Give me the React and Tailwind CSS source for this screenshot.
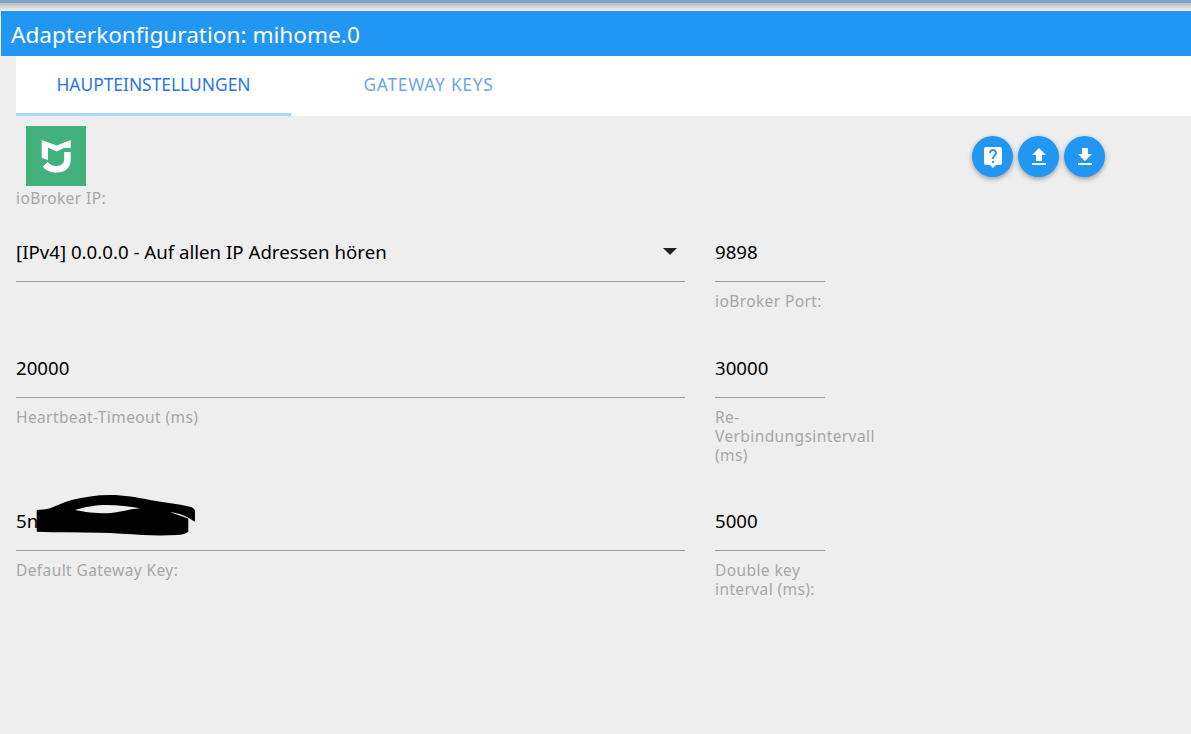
const FONT = "font-['Noto_Sans','Open_Sans',sans-serif]";
const LABEL = "text-[15.5px] leading-[19px] tracking-[0.4px] text-[#a6a6a6]";

function ActionButton({ d }) {
  return (
    <button
      type="button"
      className="flex h-[41px] w-[41px] items-center justify-center rounded-full bg-[#2196f3] shadow-[0_2px_5px_rgba(0,0,0,0.35)]"
    >
      <svg viewBox="0 0 24 24" width="24" height="24" fill="#fff" fillRule="evenodd">
        <path d={d} />
      </svg>
    </button>
  );
}

function Field({ value, label, width, arrow, children }) {
  return (
    <div className={width}>
      <div className="relative flex h-[44px] items-center justify-between border-b border-[#9e9e9e] pb-[16px] text-[18.67px] text-black">
        <span>{value}</span>
        {arrow && (
          <span className="mr-[8px] h-0 w-0 border-x-[7px] border-t-[7px] border-x-transparent border-t-[#222]" />
        )}
        {children}
      </div>
      <div className={`mt-[10px] ${LABEL}`}>{label}</div>
    </div>
  );
}

export default function App() {
  return (
    <div className={`min-h-[734px] overflow-hidden bg-[#eeeeee] ${FONT}`}>
      {/* top strip */}
      <div className="h-[3px] bg-[#7aa5d2]" />
      <div className="h-[8px] bg-gradient-to-b from-[#bdbdbd] to-[#f2f2f2]" />

      <div className="ml-[1px] flex h-[45px] items-center bg-[#2196f3] pt-[2px] pl-[10px] text-[22.6px] text-white">
        Adapterkonfiguration: mihome.0
      </div>

      <div className="ml-[16px] flex h-[60px] bg-white text-[17.4px]">
        <div className="flex w-[275px] items-center justify-center border-b-[3px] border-[#a9d6fb] text-[#2a76e4]">
          HAUPTEINSTELLUNGEN
        </div>
        <div className="flex w-[275px] items-center justify-center pb-[3px] tracking-[0.7px] text-[#6fa6ea]">
          GATEWAY KEYS
        </div>
      </div>

      <div className="pl-[16px]">
        <div className="flex h-[70px] justify-between pt-[10px] pr-[86px]">
          <svg viewBox="0 0 60 60" width="60" height="60" className="ml-[10px]">
            <rect width="60" height="60" fill="#43b17d" />
            <path d="M15.7 14L30.7 19.5L44.7 14V22H38L30.7 25.5L22 21.5V34L15.7 32z" fill="#fff" />
            <path
              d="M44.7 26v8c0 8-6 12.5-14 12.5c-6 0-11-2-14-6l5-4.5c2 2.5 5 4 9 4c5 0 7.5-3 7.5-7v-7z"
              fill="#fff"
            />
          </svg>
          <div className="flex gap-[5px] pt-[10px]">
            <ActionButton d="M19 2H5c-1.11 0-2 .9-2 2v14c0 1.1.89 2 2 2h4l3 3 3-3h4c1.1 0 2-.9 2-2V4c0-1.1-.9-2-2-2zm-6 16h-2v-2h2v2zm2.07-7.75l-.9.92C13.45 11.9 13 12.5 13 14h-2v-.5c0-1.1.45-2.1 1.17-2.83l1.24-1.26c.37-.36.59-.86.59-1.41 0-1.1-.9-2-2-2s-2 .9-2 2H8c0-2.21 1.79-4 4-4s4 1.79 4 4c0 .88-.36 1.68-.93 2.25z" />
            <ActionButton d="M9 16h6v-6h4l-7-7-7 7h4zm-4 2h14v2H5z" />
            <ActionButton d="M19 9h-4V3H9v6H5l7 7 7-7zM5 18v2h14v-2H5z" />
          </div>
        </div>

        <div className={`h-[52px] pt-[3px] ${LABEL}`}>ioBroker IP:</div>

        <div className="flex gap-[30px]">
          <Field width="w-[669px]" value="[IPv4] 0.0.0.0 - Auf allen IP Adressen hören" label="" arrow />
          <Field width="w-[110px]" value="9898" label="ioBroker Port:" />
        </div>

        <div className="mt-[43px] flex gap-[30px]">
          <Field width="w-[669px]" value="20000" label="Heartbeat-Timeout (ms)" />
          <Field width="w-[110px]" value="30000" label="Re-Verbindungsintervall (ms)" />
        </div>

        <div className="mt-[42px] flex gap-[30px]">
          <Field width="w-[669px]" value="5n" label="Default Gateway Key:">
            <svg viewBox="0 0 170 50" width="170" height="50" className="absolute top-[-17px] left-[20px]">
              <path
                d="M0.7 20C5 20 10 19.5 14 18.3C22 15 28 12 35.7 10C48 7 60 5 74 5C88 5 102 7.5 114 10C128 12.5 142 14 154 16.7C157 17.5 159 19 159 21.7V31.7L152.3 28.3V41.7C149 44 145 45 140.7 45C130 45.5 118 45.5 107 45C92 44 78 43 64 42.7C44 42.5 22 42.5 0.7 41.7z"
                fill="#000"
              />
              <path d="M39 20C48 17 60 15 70.7 15C82 15 94 16.5 104 18.3C92 19 82 23.3 70.7 23.3C60 23.3 48 22 39 20z" fill="#eeeeee" />
              <path d="M134 22.3C142 23 150 25.5 157 30.7C150 27.5 142 25 134 22.3z" fill="#eeeeee" />
            </svg>
          </Field>
          <Field width="w-[110px]" value="5000" label="Double key interval (ms):" />
        </div>
      </div>
    </div>
  );
}
